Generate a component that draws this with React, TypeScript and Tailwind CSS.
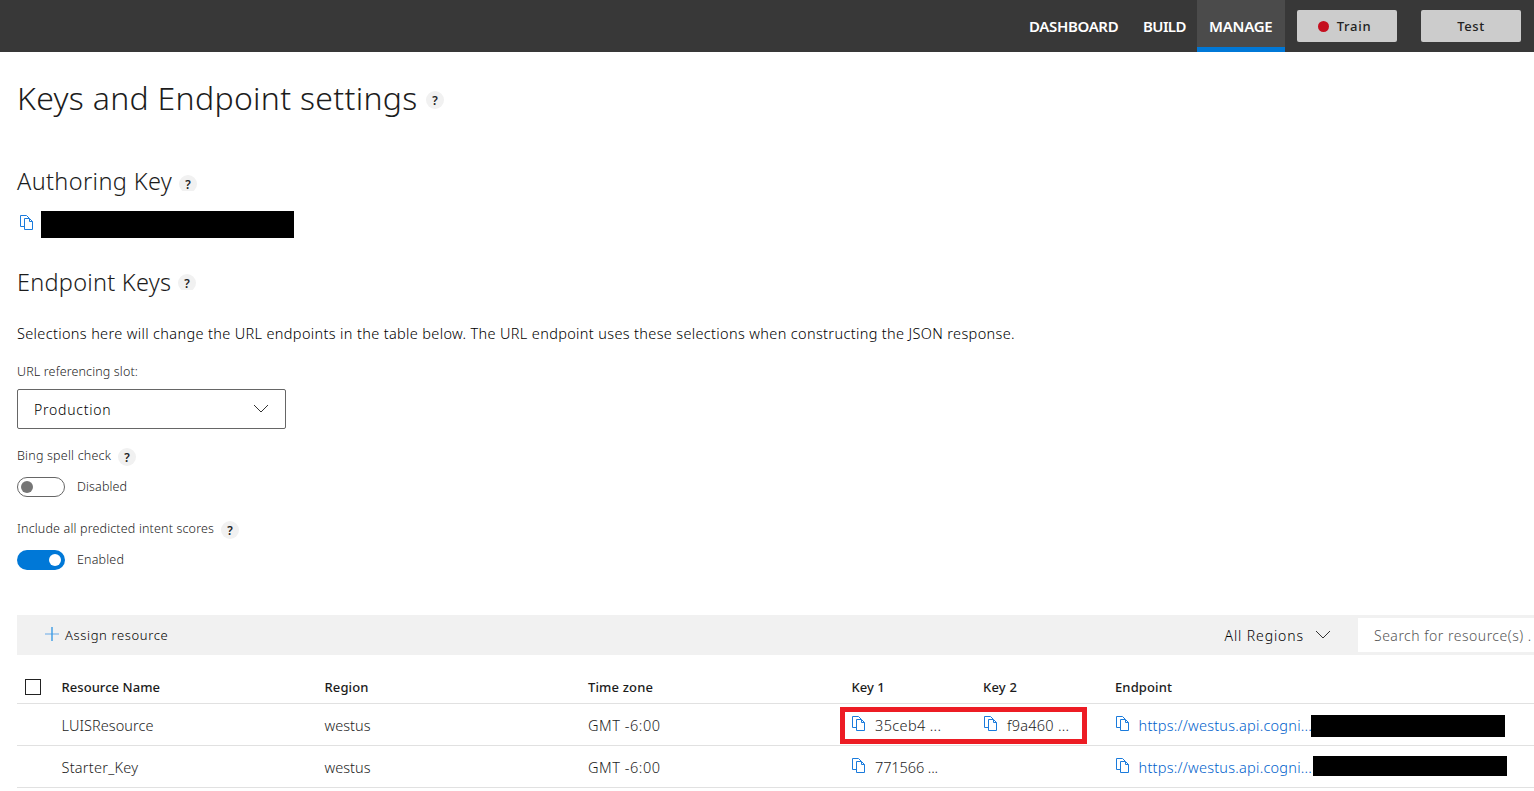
import type { ReactNode } from "react";

function CopyIcon() {
  return (
    <svg className="block h-[15px] w-[14px] shrink-0" viewBox="0 0 14 15" fill="none" stroke="#1a7bdc" strokeWidth="1">
      <path d="M4 11.5H0.5V0.5H6.5L9 3" />
      <path d="M4.5 3.5H9.5L12.5 6.5V14.5H4.5Z" />
      <path d="M9.5 3.5V6.5H12.5" />
    </svg>
  );
}

function Chevron({ className = "" }: { className?: string }) {
  return (
    <svg className={`block h-[9px] w-[16px] shrink-0 ${className}`} viewBox="0 0 16 9" fill="none" stroke="#333" strokeWidth="1">
      <path d="M1 1L8 8L15 1" />
    </svg>
  );
}

function Help({ className = "" }: { className?: string }) {
  return (
    <span className={`flex w-[18px] shrink-0 justify-center overflow-hidden ${className}`}>
      <span className="flex h-[18px] w-[18px] shrink-0 items-center justify-center rounded-full bg-[#f1f1f1] pt-px text-[12px] leading-none font-semibold text-[#222]">
        ?
      </span>
    </span>
  );
}

function HeaderButton({ children }: { children: ReactNode }) {
  return (
    <button className="flex h-8 w-[100px] items-center justify-center rounded-[2px] bg-[#cccccc] text-[13px] leading-none font-medium text-[#222]">
      {children}
    </button>
  );
}

function KeyCell({ value, tracking }: { value: string; tracking: string }) {
  return (
    <div className="flex items-start pl-px">
      <span className="pt-[2px]">
        <CopyIcon />
      </span>
      <span className={`ml-[9px] ${tracking}`}>{value}</span>
    </div>
  );
}

const columns = "grid grid-cols-[44px_263px_264px_263px_132px_132px_1fr] border-b border-[#e1e1e1]";

export default function App() {
  return (
    <div className="h-[791px] w-full overflow-hidden bg-white font-['Noto_Sans','Open_Sans',sans-serif] font-light whitespace-nowrap text-[#1c1c1c]">
      <header className="flex h-[52px] items-center justify-end bg-[#383838] text-[15px] leading-none font-semibold text-white">
        <span className="w-[114px] pl-3 tracking-[-0.35px]">DASHBOARD</span>
        <span className="w-[66px] pl-3 tracking-[-0.6px]">BUILD</span>
        <span className="flex h-full w-[88px] items-center border-b-[5px] border-[#0078d7] bg-[#4b4b4b] pt-[5px] pl-[12px] tracking-[-0.25px]">
          MANAGE
        </span>
        <div className="flex gap-6 pr-[13px] pl-3">
          <HeaderButton>
            <span className="mr-2 -ml-[5px] h-[11px] w-[11px] rounded-full bg-[#c50f1f]" />
            <span className="tracking-[0.7px]">Train</span>
          </HeaderButton>
          <HeaderButton>
            <span className="tracking-[0.6px]">Test</span>
          </HeaderButton>
        </div>
      </header>

      <main className="pl-[17px]">
        <div className="mt-[26px] flex h-[40px] items-center">
          <h1 className="w-[409px] text-[32px] leading-[40px] tracking-[0.3px]">Keys and Endpoint settings</h1>
          <Help className="mt-[4px]" />
        </div>

        <div className="mt-[48px] flex h-[30px]">
          <h2 className="w-[162px] text-[23.5px] leading-[31px] tracking-[0.36px]">Authoring Key</h2>
          <Help className="mt-[9px] h-4" />
        </div>
        <div className="mt-[15px] flex h-[27px] pl-[3px]">
          <span className="pt-1">
            <CopyIcon />
          </span>
          <span className="ml-[7px] h-[27px] w-[253px] bg-black" />
        </div>

        <div className="mt-[29px] flex h-[30px]">
          <h2 className="w-[161px] text-[23.5px] leading-[31px] tracking-[0.25px]">Endpoint Keys</h2>
          <Help className="mt-[7px] h-4" />
        </div>
        <p className="mt-[26px] text-[14.5px] leading-[20px] tracking-[0.35px] text-black">
          Selections here will change the URL endpoints in the table below. The URL endpoint uses these selections when
          constructing the JSON response.
        </p>

        <label className="mt-[21px] block text-[12.5px] leading-4 tracking-[0.14px]">URL referencing slot:</label>
        <div className="mt-[9px] flex h-10 w-[269px] items-center justify-between rounded-[2px] border border-[#666] pr-4 pl-4 text-[14px] leading-none">
          <span className="pt-[2px] tracking-[0.75px] text-black">Production</span>
          <Chevron className="-mt-[2px]" />
        </div>

        <div className="mt-[19px] flex h-[18px] text-[12.5px] leading-4">
          <span className="w-[101px] tracking-[0.21px]">Bing spell check</span>
          <Help />
        </div>
        <div className="mt-[11px] flex h-5 items-center text-[12.5px] leading-none">
          <span className="flex h-5 w-12 items-center rounded-full border border-[#666] pl-[3px]">
            <span className="h-3 w-3 rounded-full bg-[#767676]" />
          </span>
          <span className="mt-px ml-3 tracking-[0.13px]">Disabled</span>
        </div>

        <div className="mt-[24px] flex h-[18px] text-[12.5px] leading-4">
          <span className="w-[204px] tracking-[0.16px]">Include all predicted intent scores</span>
          <Help />
        </div>
        <div className="mt-[11px] flex h-5 items-center text-[12.5px] leading-none">
          <span className="flex h-5 w-12 items-center justify-end rounded-full bg-[#0078d7] pr-1">
            <span className="h-3 w-3 rounded-full bg-white" />
          </span>
          <span className="mt-px ml-3 tracking-[0.18px]">Enabled</span>
        </div>

        <div className="mt-[45px] flex h-10 items-center bg-[#f1f1f1] pl-7 text-[14px] leading-none">
          <svg className="-mt-[2px] h-[14px] w-[14px]" viewBox="0 0 14 14" fill="none" strokeWidth="1.4">
            <path d="M0 7H14" stroke="#8fbdea" />
            <path d="M7 0V14" stroke="#3a9be4" />
          </svg>
          <span className="ml-[6px] text-[13px] tracking-[0.63px] text-black">Assign resource</span>
          <span className="ml-auto pt-[2px] tracking-[0.9px] text-black">All Regions</span>
          <Chevron className="-mt-[2px] ml-[11px]" />
          <div className="ml-[27px] flex h-[34px] w-[176px] items-center overflow-hidden bg-white pt-[2px] pl-4 tracking-[0.5px] text-[#555]">
            Search for resource(s) .
          </div>
        </div>

        <div className="relative mt-[16px] text-[14.5px]">
          <div className={`${columns} h-[33px] text-[13px] leading-[32px] font-medium`}>
            <span className="ml-[8px] mt-2 h-4 w-4 border border-[#222]" />
            <span className="pl-[0.5px] tracking-[0.05px]">Resource Name</span>
            <span className="pl-[0.5px] tracking-[0.1px]">Region</span>
            <span className="tracking-[0.15px]">Time zone</span>
            <span className="pl-[0.5px] tracking-[0px]">Key 1</span>
            <span className="tracking-[0.2px]">Key 2</span>
            <span className="tracking-[0.12px]">Endpoint</span>
          </div>

          <div className={`${columns} h-[42px] pt-[10px] leading-[22px]`}>
            <span />
            <span className="pl-[0.5px] tracking-[0.07px]">LUISResource</span>
            <span className="pl-[0.5px] tracking-[0.04px]">westus</span>
            <span className="tracking-[0.54px]">GMT -6:00</span>
            <KeyCell value="35ceb4 ..." tracking="tracking-[0.36px]" />
            <KeyCell value="f9a460 ..." tracking="tracking-[0.25px]" />
            <div className="flex">
              <span className="pt-[2px] pl-px">
                <CopyIcon />
              </span>
              <a className="ml-2 w-[173px] pl-[0.5px] tracking-[0.24px] text-[#0062cc]">https://westus.api.cogni...</a>
              <span className="relative mt-px h-[22px] w-[194px] bg-black" />
            </div>
          </div>

          <div className={`${columns} h-[42px] pt-[10px] leading-[22px]`}>
            <span />
            <span className="pl-[0.5px] tracking-[0.25px]">Starter_Key</span>
            <span className="pl-[0.5px] tracking-[0.04px]">westus</span>
            <span className="tracking-[0.54px]">GMT -6:00</span>
            <KeyCell value="771566 ..." tracking="tracking-[-0.1px]" />
            <span />
            <div className="flex">
              <span className="pt-[2px] pl-px">
                <CopyIcon />
              </span>
              <a className="ml-2 w-[175px] pl-[0.5px] tracking-[0.24px] text-[#0062cc]">https://westus.api.cogni...</a>
              <span className="h-5 w-[194px] bg-black" />
            </div>
          </div>

          <div className="absolute top-[36px] left-[823px] h-[37px] w-[247px] border-[5px] border-[#ed1c24]" />
        </div>
      </main>
    </div>
  );
}
